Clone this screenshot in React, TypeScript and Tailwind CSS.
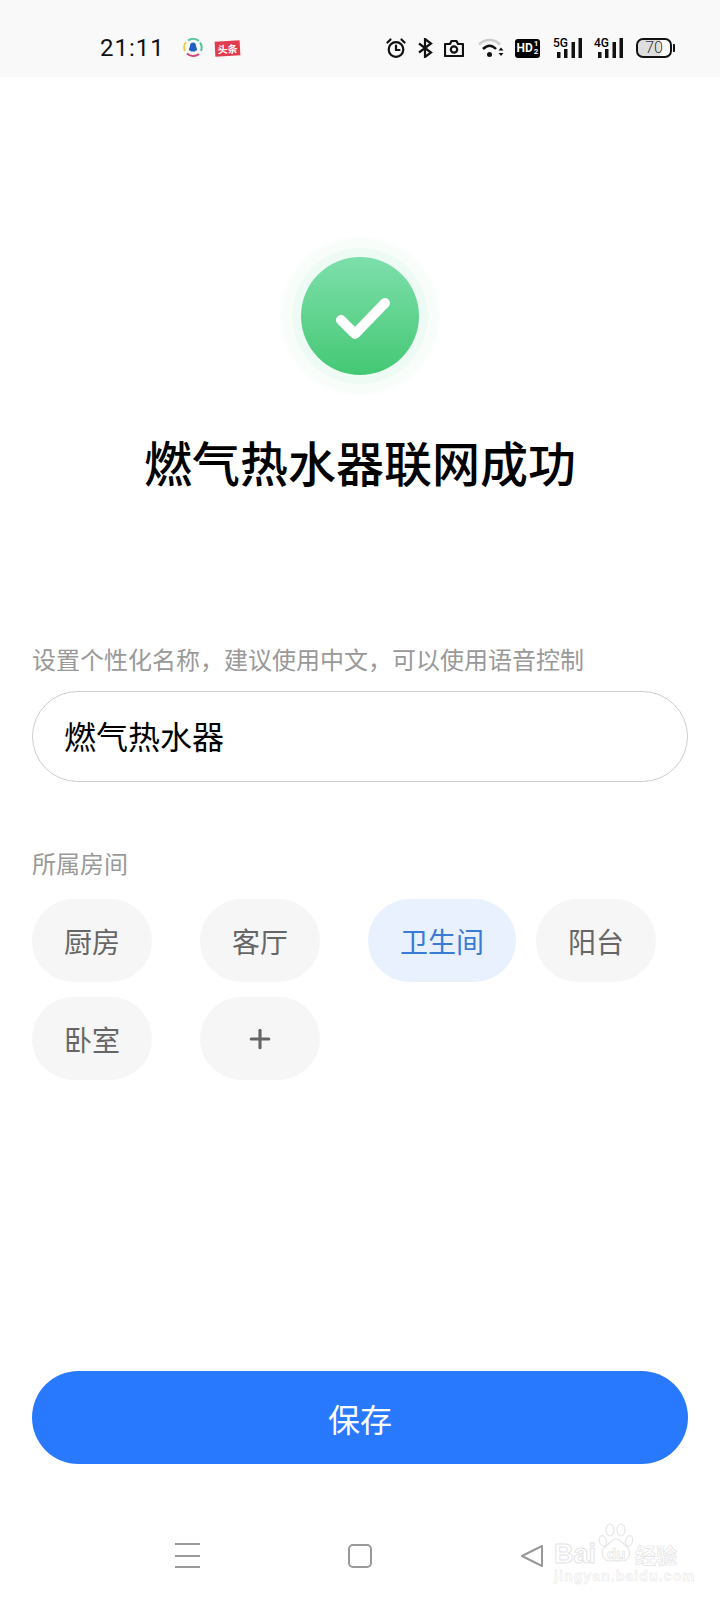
import { Plus } from "lucide-react";

const rooms = ["厨房", "客厅", "卫生间", "阳台", "卧室"];

function SignalIcon({ label }: { label: string }) {
    return (
        <div className="relative h-[20px] w-[29px]">
            <span className="absolute left-0 top-[-1px] font-['Roboto',sans-serif] text-[12px] font-medium leading-[12px] text-black">{label}</span>
            <svg width="29" height="20" viewBox="0 0 29 20" fill="#111">
                <rect x="4" y="14" width="3.500" height="6" />
                <rect x="11" y="11" width="3.500" height="9" />
                <rect x="18.500" y="4" width="3.500" height="16" />
                <rect x="25.500" y="0" width="3.500" height="20" />
            </svg>
        </div>
    );
}

function StatusBar() {
    return (
        <div className="flex h-[77px] items-center bg-[#f9f9f9] pl-[100px] pt-[19px]">
            <span className="w-[62px] font-['Roboto',sans-serif] text-[24px] leading-[30px] tracking-[1px] text-[#111]">21:11</span>
            <svg className="ml-[21px]" width="20" height="20" viewBox="0 0 20 20" fill="none">
                <path d="M5 2.500A9 9 0 0 1 16 3" stroke="#5bc8a8" strokeWidth="2" />
                <path d="M3 4A9 9 0 0 0 2 13" stroke="#e6cf4c" strokeWidth="2" />
                <path d="M17 4.500A9 9 0 0 1 18 13" stroke="#4cc4a0" strokeWidth="2" />
                <path d="M4 15.500A9 9 0 0 0 16 16" stroke="#d8457a" strokeWidth="2" />
                <path d="M10 4.500c2 0 3 1.500 3 3.500 0 1 1.500 3 1 4.500-.8.2-1.200-.3-1.200-.3s-.3 1-1 1.400H8.200c-.7-.4-1-1.400-1-1.400s-.4.500-1.200.300C5.500 11 7 9 7 8c0-2 1-3.500 3-3.500z" fill="#1f5fc4" />
            </svg>
            <div className="ml-[12px] flex h-[15px] w-[25px] -rotate-3 items-center justify-center bg-[#e23b4e] font-['Noto_Sans_CJK_SC',sans-serif] text-[10px] font-bold leading-none text-white">头条</div>
            <svg className="ml-[146px]" width="20" height="20" viewBox="0 0 20 20" fill="none" stroke="#111" strokeWidth="2.200" strokeLinecap="round">
                <circle cx="10" cy="11.500" r="7.300" />
                <path d="M10 7.500v4.500h3.500M1.500 4.500 4.500 1.500M18.500 4.500l-3-3" />
            </svg>
            <svg className="ml-[11px]" width="16" height="20" viewBox="0 0 16 20" fill="none" stroke="#111" strokeWidth="2.200">
                <path d="M2 5.500 14 14.500 8 19V1l6 4.500L2 14.500" />
            </svg>
            <svg className="ml-[11px]" width="20" height="18" viewBox="0 0 20 18" fill="none" stroke="#111" strokeWidth="2.200">
                <path d="M1 5h5l1.500-3h5L14 5h5v12H1z" strokeLinejoin="round" />
                <circle cx="10" cy="10.500" r="3.200" />
            </svg>
            <svg className="ml-[14px]" width="27" height="20" viewBox="0 0 27 20" fill="none">
                <path d="M1 6.500C7 .5 16 .5 22 6.500" stroke="#cccccc" strokeWidth="2.500" />
                <path d="M5 11C9.500 6.500 14 6.500 18 11" stroke="#111" strokeWidth="2.500" />
                <circle cx="11.500" cy="16.500" r="2.500" fill="#111" />
                <path d="M20.500 12.500l2.500-3 2.500 3zM20.500 15l2.500 3 2.500-3z" fill="#111" />
            </svg>
            <div className="ml-[10px] flex h-[19px] w-[25px] items-center justify-center rounded-[3px] bg-black font-['Roboto',sans-serif] text-[12px] font-bold leading-none text-white">
                HD<span className="ml-[1px] flex flex-col text-[8px] leading-[8px]"><span>1</span><span>2</span></span>
            </div>
            <div className="ml-[13px]"><SignalIcon label="5G" /></div>
            <div className="ml-[12px]"><SignalIcon label="4G" /></div>
            <div className="ml-[13px] flex items-center">
                <div className="flex h-[20px] w-[36px] items-center justify-center rounded-[7px] border-2 border-[#111] bg-gradient-to-r from-[#dedede] from-70% to-white to-70% font-['Roboto',sans-serif] text-[16px] font-light leading-none text-[#333]">70</div>
                <div className="ml-[1px] h-[8px] w-[2px] rounded-r-[1px] bg-[#111]" />
            </div>
        </div>
    );
}

function SuccessIcon() {
    return (
        <div className="mt-[180px] flex justify-center">
            <div className="size-[118px] rounded-full bg-gradient-to-b from-[#7cdfab] to-[#43c874] shadow-[0_0_0_9px_#eefbf4,0_0_4px_20px_#f8fdfa]">
                <svg width="118" height="118" viewBox="0 0 118 118" fill="none" stroke="#fff" strokeWidth="10" strokeLinecap="round" strokeLinejoin="round">
                    <path d="M40 63 54 77 84 46" />
                </svg>
            </div>
        </div>
    );
}

function Watermark() {
    return (
        <div className="absolute left-[554px] top-[1523px] w-[128px] select-none">
            <svg className="absolute left-[43px] top-0" width="38" height="40" viewBox="0 0 38 40" fill="#fff" stroke="#e6e6e6" strokeWidth="1.200">
                <ellipse cx="6" cy="18" rx="3.500" ry="5.500" transform="rotate(-15 6 18)" />
                <ellipse cx="13" cy="7" rx="4" ry="6" />
                <ellipse cx="24" cy="7" rx="4" ry="6" />
                <ellipse cx="32" cy="18" rx="3.500" ry="5.500" transform="rotate(15 32 18)" />
                <path d="M19 16c5 0 6 4 11 8 5 5 2 14-5 14-4 0-8-1-12 0-7 0-10-8-6-13 5-3 7-9 12-9z" />
            </svg>
            <div className="relative mt-[19px] flex items-center font-['Liberation_Sans',sans-serif] leading-[24px] text-white [-webkit-text-stroke:1px_#e4e4e4]">
                <span className="w-[53px] text-[27px] font-bold">Bai</span>
                <span className="w-[28px] text-[15px] font-bold [-webkit-text-stroke:0.7px_#e4e4e4]">du</span>
                <span className="font-['Noto_Sans_CJK_SC',sans-serif] text-[21px] font-bold [-webkit-text-stroke:0.7px_#e4e4e4]">经验</span>
            </div>
            <div className="relative mt-[3px] whitespace-nowrap font-['Liberation_Sans',sans-serif] text-[14px] font-bold leading-[14px] tracking-[1.100px] text-white [-webkit-text-stroke:0.5px_#e6e6e6]">jingyan.baidu.com</div>
        </div>
    );
}

export default function App() {
    return (
        <div className="relative h-[1600px] w-[720px] overflow-hidden bg-white font-['Noto_Sans_CJK_SC',sans-serif]">
            <StatusBar />
            <SuccessIcon />
            <h1 className="mt-[54px] text-center text-[48px] font-medium leading-[64px] text-black">燃气热水器联网成功</h1>

            <div className="px-[32px]">
                <div className="mt-[150px] text-[24px] leading-[32px] text-[#999]">设置个性化名称，建议使用中文，可以使用语音控制</div>
                <div className="mt-[16px] flex h-[91px] items-center rounded-full border border-[#cccccc] pb-[3px] pl-[31px] text-[32px] text-black">燃气热水器</div>

                <div className="mt-[65px] text-[24px] leading-[32px] text-[#999]">所属房间</div>
                <div className="mt-[20px] grid grid-cols-[repeat(4,148px)] gap-x-[20px] gap-y-[15px]">
                    {rooms.map((room) => (
                        <div key={room}>
                            <div className={`inline-flex h-[83px] min-w-[120px] items-center justify-center rounded-full px-[32px] text-[28px] ${room === "卫生间" ? "bg-[#e8f1fd] text-[#3a7bd5]" : "bg-[#f6f6f6] text-[#666]"}`}>
                                {room}
                            </div>
                        </div>
                    ))}
                    <div className="flex h-[83px] w-[120px] items-center justify-center rounded-full bg-[#f6f6f6] text-[#666]">
                        <Plus size={30} strokeWidth={2.500} />
                    </div>
                </div>

                <button className="mt-[291px] flex h-[93px] w-full items-center justify-center rounded-full bg-[#2979ff] text-[32px] text-white">保存</button>
            </div>

            <div className="ml-[175px] mt-[79px] flex items-center">
                <div className="flex h-[25px] w-[25px] flex-col justify-between">
                    <span className="h-[2px] bg-[#999]" />
                    <span className="h-[2px] bg-[#999]" />
                    <span className="h-[2px] bg-[#999]" />
                </div>
                <div className="ml-[148px] size-[24px] rounded-[5px] border-2 border-[#999]" />
                <svg className="ml-[148px]" width="24" height="24" viewBox="0 0 24 24" fill="none" stroke="#999" strokeWidth="2" strokeLinejoin="round">
                    <path d="M22 2v20L2 12z" />
                </svg>
            </div>

            <Watermark />
        </div>
    );
}
